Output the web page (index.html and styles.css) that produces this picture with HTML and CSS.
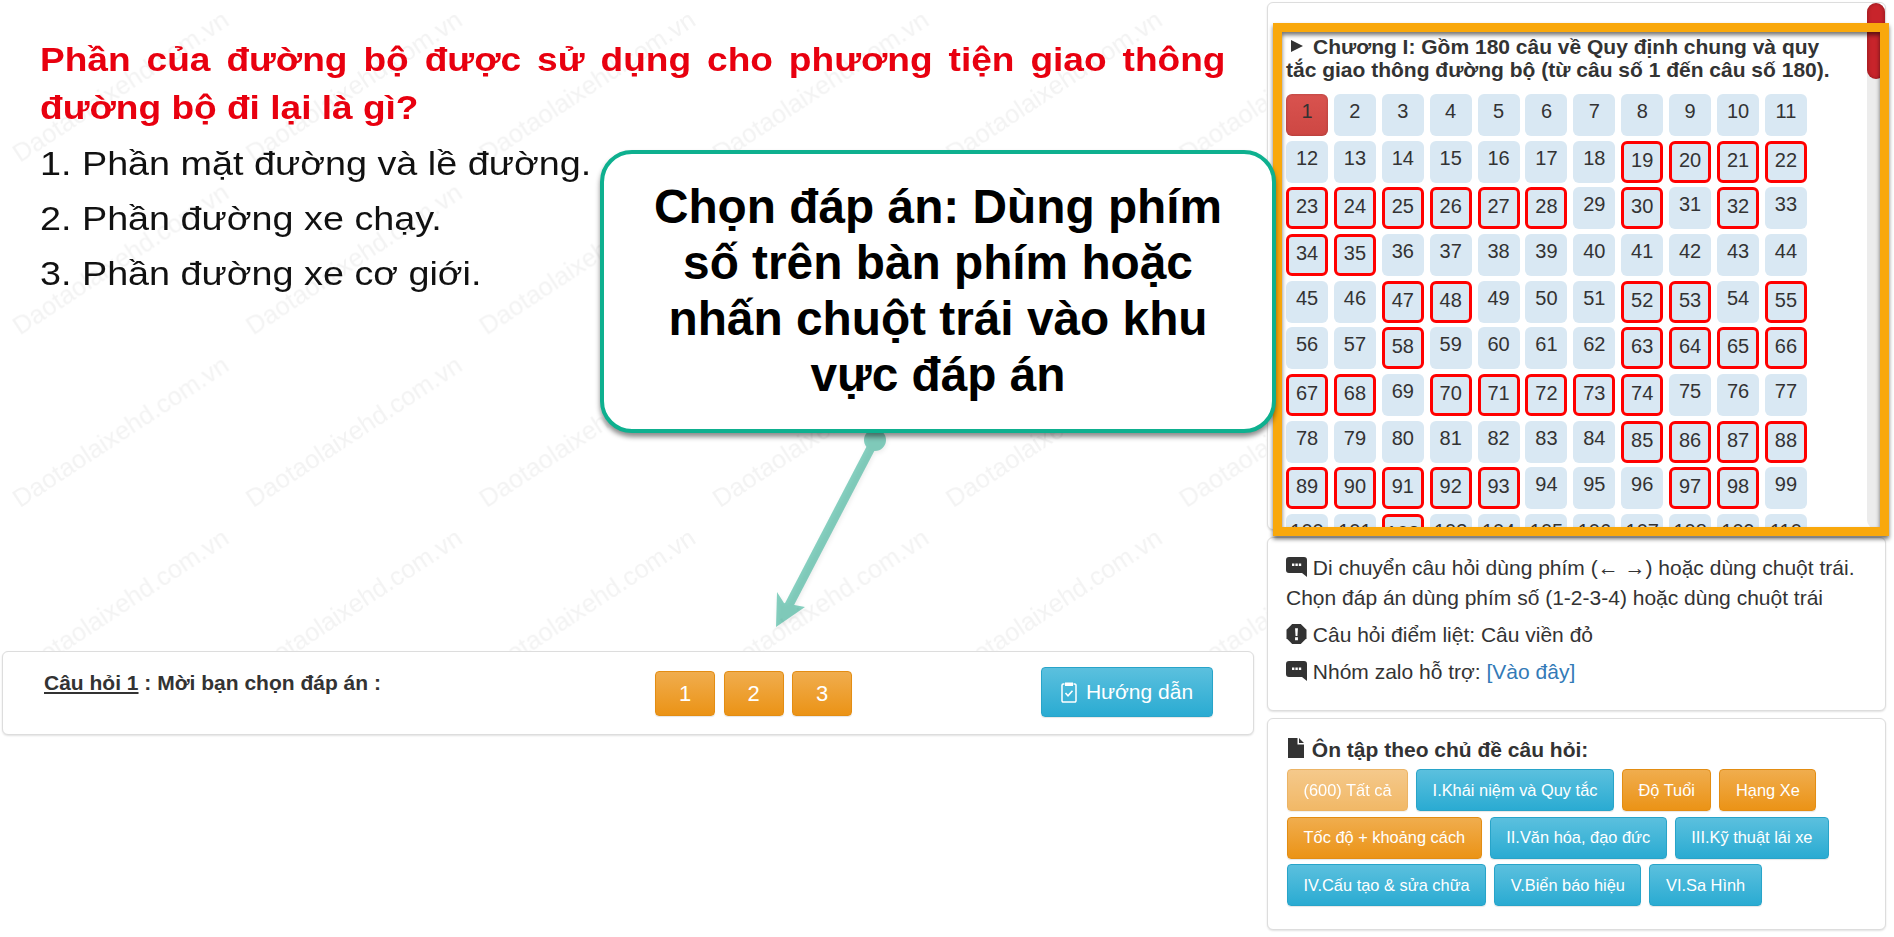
FILE: index.html
```html
<!DOCTYPE html>
<html lang="vi">
<head>
<meta charset="utf-8">
<title>Ôn tập câu hỏi</title>
<link rel="stylesheet" href="styles.css">
</head>
<body>
<div class="page">
  <main class="main">
    <section class="stage">
      <svg class="watermark" aria-hidden="true">
        <defs>
          <pattern id="wm" patternUnits="userSpaceOnUse" width="233.33" height="172.67">
            <text class="wm-text" transform="translate(20 163) rotate(-33.4)">Daotaolaixehd.com.vn</text>
          </pattern>
        </defs>
        <rect width="100%" height="100%" fill="url(#wm)"/>
      </svg>
      <div class="question">
        <h1 class="q-title">Phần của đường bộ được sử dụng cho phương tiện giao thông đường bộ đi lại là gì?</h1>
        <p class="q-answer">1. Phần mặt đường và lề đường.</p>
        <p class="q-answer">2. Phần đường xe chạy.</p>
        <p class="q-answer">3. Phần đường xe cơ giới.</p>
      </div>
    </section>
    <section class="answer-bar card">
      <div class="answer-label"><u>Câu hỏi 1</u> : Mời bạn chọn đáp án :</div>
      <div class="answer-btns">
        <button class="btn btn-orange ans">1</button>
        <button class="btn btn-orange ans">2</button>
        <button class="btn btn-orange ans">3</button>
      </div>
      <button class="btn btn-blue guide">
        <svg class="clip-icon" viewBox="0 0 16 22" aria-hidden="true"><path d="M3.5 3H2.2A1.2 1.2 0 0 0 1 4.2v15.6A1.2 1.2 0 0 0 2.2 21h11.6a1.2 1.2 0 0 0 1.2-1.2V4.2A1.2 1.2 0 0 0 13.800 3h-1.300" fill="none" stroke="#fff" stroke-width="1.500"/><path d="M4 1.500h8V5H4z" fill="#fff"/><path d="M4.500 12l2.500 2.700 4.500-5" fill="none" stroke="#fff" stroke-width="1.600"/></svg>
        Hướng dẫn
      </button>
    </section>
  </main>

  <aside class="side">
    <section class="card list-card">
      <div class="list-view">
        <h2 class="chapter"><span class="tri"></span>Chương I: Gồm 180 câu về Quy định chung và quy tắc giao thông đường bộ (từ câu số 1 đến câu số 180).</h2>
        <div class="q-grid">
          <a class="q active">1</a><a class="q">2</a><a class="q">3</a><a class="q">4</a><a class="q">5</a><a class="q">6</a><a class="q">7</a><a class="q">8</a><a class="q">9</a><a class="q">10</a><a class="q">11</a>
          <a class="q">12</a><a class="q">13</a><a class="q">14</a><a class="q">15</a><a class="q">16</a><a class="q">17</a><a class="q">18</a><a class="q crit">19</a><a class="q crit">20</a><a class="q crit">21</a><a class="q crit">22</a>
          <a class="q crit">23</a><a class="q crit">24</a><a class="q crit">25</a><a class="q crit">26</a><a class="q crit">27</a><a class="q crit">28</a><a class="q">29</a><a class="q crit">30</a><a class="q">31</a><a class="q crit">32</a><a class="q">33</a>
          <a class="q crit">34</a><a class="q crit">35</a><a class="q">36</a><a class="q">37</a><a class="q">38</a><a class="q">39</a><a class="q">40</a><a class="q">41</a><a class="q">42</a><a class="q">43</a><a class="q">44</a>
          <a class="q">45</a><a class="q">46</a><a class="q crit">47</a><a class="q crit">48</a><a class="q">49</a><a class="q">50</a><a class="q">51</a><a class="q crit">52</a><a class="q crit">53</a><a class="q">54</a><a class="q crit">55</a>
          <a class="q">56</a><a class="q">57</a><a class="q crit">58</a><a class="q">59</a><a class="q">60</a><a class="q">61</a><a class="q">62</a><a class="q crit">63</a><a class="q crit">64</a><a class="q crit">65</a><a class="q crit">66</a>
          <a class="q crit">67</a><a class="q crit">68</a><a class="q">69</a><a class="q crit">70</a><a class="q crit">71</a><a class="q crit">72</a><a class="q crit">73</a><a class="q crit">74</a><a class="q">75</a><a class="q">76</a><a class="q">77</a>
          <a class="q">78</a><a class="q">79</a><a class="q">80</a><a class="q">81</a><a class="q">82</a><a class="q">83</a><a class="q">84</a><a class="q crit">85</a><a class="q crit">86</a><a class="q crit">87</a><a class="q crit">88</a>
          <a class="q crit">89</a><a class="q crit">90</a><a class="q crit">91</a><a class="q crit">92</a><a class="q crit">93</a><a class="q">94</a><a class="q">95</a><a class="q">96</a><a class="q crit">97</a><a class="q crit">98</a><a class="q">99</a>
          <a class="q">100</a><a class="q">101</a><a class="q crit">102</a><a class="q">103</a><a class="q">104</a><a class="q">105</a><a class="q">106</a><a class="q">107</a><a class="q">108</a><a class="q">109</a><a class="q">110</a>
        </div>
      </div>
      <div class="scroll-track"><div class="scroll-thumb"></div></div>
    </section>

    <section class="card help-card">
      <p class="help-line">
        <svg class="ico" viewBox="0 0 21 20" aria-hidden="true"><path d="M3 0h15a3 3 0 0 1 3 3v17l-5-4H3a3 3 0 0 1-3-3V3a3 3 0 0 1 3-3z" fill="#333"/><path d="M6 6.500h2.400v2.400H6zM9.400 6.500h2.400v2.400H9.400zM12.800 6.500h2.400v2.400h-2.400z" fill="#fff"/></svg>
        Di chuyển câu hỏi dùng phím (← →) hoặc dùng chuột trái.<br>Chọn đáp án dùng phím số (1-2-3-4) hoặc dùng chuột trái
      </p>
      <p class="help-line">
        <svg class="ico" viewBox="0 0 21 21" aria-hidden="true"><path d="M6 0h9l6 6v9l-6 6H6l-6-6V6z" fill="#333"/><path d="M9 4.500h3l-.5 8h-2zM9 14h3v3H9z" fill="#fff"/></svg>
        Câu hỏi điểm liệt: Câu viền đỏ
      </p>
      <p class="help-line">
        <svg class="ico" viewBox="0 0 21 20" aria-hidden="true"><path d="M3 0h15a3 3 0 0 1 3 3v17l-5-4H3a3 3 0 0 1-3-3V3a3 3 0 0 1 3-3z" fill="#333"/><path d="M6 6.500h2.400v2.400H6zM9.400 6.500h2.400v2.400H9.400zM12.800 6.500h2.400v2.400h-2.400z" fill="#fff"/></svg>
        Nhóm zalo hỗ trợ: <a class="link">[Vào đây]</a>
      </p>
    </section>

    <section class="card topic-card">
      <h3 class="topic-title">
        <svg class="doc-ico" viewBox="0 0 16 20" aria-hidden="true"><path d="M0 0h9.500v6.500H16V20H0zM11 0l5 5h-5z" fill="#333"/></svg>
        Ôn tập theo chủ đề câu hỏi:
      </h3>
      <div class="topics">
        <button class="btn btn-orange topic faded">(600) Tất cả</button>
        <button class="btn btn-blue topic">I.Khái niệm và Quy tắc</button>
        <button class="btn btn-orange topic">Độ Tuổi</button>
        <button class="btn btn-orange topic">Hạng Xe</button>
        <button class="btn btn-orange topic">Tốc độ + khoảng cách</button>
        <button class="btn btn-blue topic">II.Văn hóa, đạo đức</button>
        <button class="btn btn-blue topic">III.Kỹ thuật lái xe</button>
        <button class="btn btn-blue topic">IV.Cấu tạo &amp; sửa chữa</button>
        <button class="btn btn-blue topic">V.Biển báo hiệu</button>
        <button class="btn btn-blue topic">VI.Sa Hình</button>
      </div>
    </section>
  </aside>

  <svg class="arrow" viewBox="0 0 120 210" aria-hidden="true">
    <g class="arrow-g">
      <path d="M105 15 L17.500 183" class="arrow-line"/>
      <circle cx="105" cy="15" r="11"/>
      <path d="M6 202 L7 167 L14 178 L35 182z"/>
    </g>
  </svg>

  <div class="highlight"></div>
  <div class="callout">Chọn đáp án: Dùng phím số trên bàn phím hoặc nhấn chuột trái vào khu vực đáp án</div>
</div>
</body>
</html>
```

FILE: styles.css
```css
* { box-sizing: border-box; }
html, body { margin: 0; padding: 0; background: #fff; }
body { font-family: "Liberation Sans", Arial, sans-serif; color: #333; }
.page { position: relative; display: flex; width: 1894px; height: 937px; overflow: hidden; }

.card { background: #fff; border: 1px solid #ddd; border-radius: 6px; box-shadow: 0 1px 2px rgba(0,0,0,.12); }

.main { width: 1267px; flex: none; }
.stage { position: relative; height: 651px; overflow: hidden; padding-left: 40px; }
.watermark { position: absolute; inset: 0; width: 100%; height: 100%; }
.wm-text { font: 25.500px "Liberation Sans", Arial, sans-serif; fill: #f3f3f3; }
.question { position: relative; padding-top: 36px; width: 1068px; transform: scaleX(1.11); transform-origin: 0 0; }
.q-title { margin: 0 0 5px; font-size: 33.400px; line-height: 47.500px; font-weight: 700; color: #e8000f; text-align: justify; }
.q-answer { margin: 0; font-size: 34px; line-height: 55px; color: #111; }

.answer-bar { display: flex; align-items: flex-start; width: 1252px; height: 84px; margin-left: 2px; padding: 15px 40px 0 41px; }
.answer-label { flex: 0 0 611px; padding-top: 5px; font-size: 21px; line-height: 22px; font-weight: 700; }
.answer-btns { display: flex; gap: 8.500px; flex: 1; margin-top: 4px; }

.btn { border: 1px solid transparent; border-radius: 4px; color: #fff; font-family: inherit; padding: 0; box-shadow: 0 1px 1px rgba(0,0,0,.1); }
.btn-orange { background: linear-gradient(#f0ad4e, #eb9316); border-color: #e38d13; }
.btn-blue { background: linear-gradient(#5bc0de, #2aabd2); border-color: #28a4c9; }
.ans { width: 60px; height: 45px; font-size: 22px; }
.guide { display: flex; align-items: center; justify-content: center; gap: 9px; width: 172px; height: 50px; font-size: 21px; }
.clip-icon { width: 16px; height: 22px; }

.side { width: 619px; flex: none; display: flex; flex-direction: column; gap: 7px; padding-top: 2px; }
.list-card { display: flex; height: 528px; overflow: hidden; }
.list-view { flex: 1; overflow: hidden; padding: 32px 0 0 18px; }
.chapter { margin: 0 0 13px; font-size: 21px; line-height: 23px; font-weight: 700; width: 552px; }
.tri { display: inline-block; width: 0; height: 0; margin: 0 10px 2px 5px; border-left: 12px solid #333; border-top: 6px solid transparent; border-bottom: 6px solid transparent; }
.q-grid { display: grid; grid-template-columns: repeat(11, 42px); column-gap: 5.900px; row-gap: 4.670px; }
.q { display: block; height: 42px; padding-top: 5px; font-size: 20px; line-height: 24px; text-align: center; color: #333; background: #d9e8f3; border-radius: 6px; }
.q.crit { border: 3px solid #f00; padding-top: 4px; line-height: 24px; }
.q.active { background: linear-gradient(#d9534f, #cd4743); box-shadow: inset 0 0 3px rgba(0,0,0,.2); }
.scroll-track { flex: none; width: 18px; background: #ececec; border-radius: 9px; }
.scroll-thumb { width: 100%; height: 76px; background: #c8242b; border-radius: 9px; box-shadow: inset 2px 0 3px rgba(0,0,0,.15), inset -2px 0 3px rgba(0,0,0,.15); }

.help-card { height: 174px; padding: 15px 10px 0 18px; }
.help-line { margin: 0 0 7px; font-size: 21px; line-height: 30px; color: #333; }
.ico { width: 21px; height: 20px; vertical-align: -2px; }
.link { color: #337ab7; }

.topic-card { height: 212px; padding: 19px 10px 0 20px; }
.topic-title { margin: 0 0 7px; font-size: 21px; line-height: 24px; font-weight: 700; }
.doc-ico { width: 16px; height: 20px; vertical-align: -1px; margin-right: 2px; }
.topics { display: flex; flex-wrap: wrap; gap: 5.500px 8px; margin-left: -1px; }
.topic { height: 42px; padding: 0 15.500px; font-size: 16.400px; }
.faded { opacity: .65; }

.arrow { position: absolute; left: 770px; top: 425px; width: 120px; height: 210px; filter: drop-shadow(1px 2px 2px rgba(0,0,0,.15)); }
.arrow-g { fill: #12a585; stroke: none; opacity: .5; }
.arrow-line { stroke: #12a585; stroke-width: 9px; fill: none; }

.callout { position: absolute; left: 600px; top: 150px; width: 676px; height: 283px; padding: 25px 40px 0; background: #fff; border: 4px solid #0eb08f; border-radius: 32px; box-shadow: 0 4px 5px rgba(0,0,0,.45); font-size: 47.800px; line-height: 56px; font-weight: 700; color: #000; text-align: center; }
.highlight { position: absolute; left: 1273px; top: 23px; width: 616px; height: 513px; border: 9px solid #f9a80c; filter: drop-shadow(0 3px 2px rgba(0,0,0,.55)); }
```
